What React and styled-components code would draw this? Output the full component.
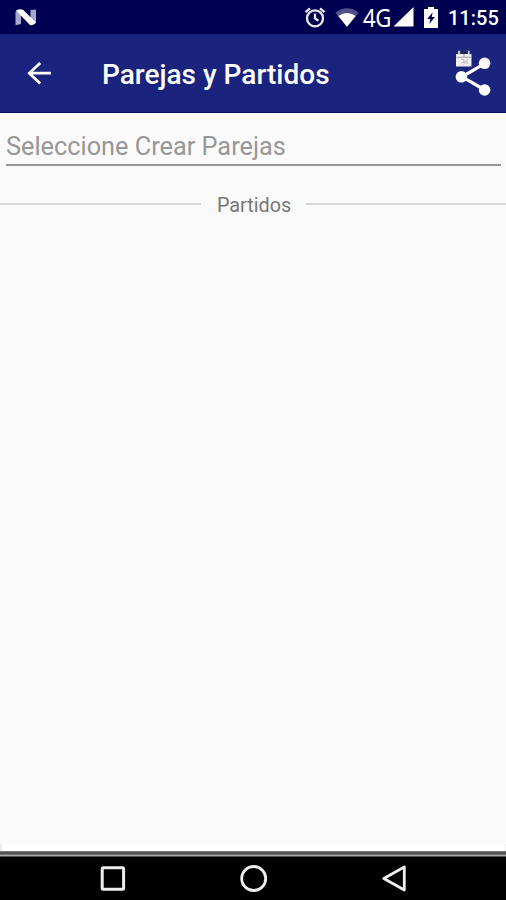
import React from "react";
import styled, { createGlobalStyle } from "styled-components";

const GlobalStyle = createGlobalStyle`
  *, *::before, *::after { box-sizing: border-box; }
  html, body { margin: 0; padding: 0; background: #fafafa; }
  body { font-family: Roboto, "Noto Sans", sans-serif; }
`;

const Screen = styled.div`
  display: flex;
  flex-direction: column;
  width: 506px;
  height: 900px;
  overflow: hidden;
  background: #fafafa;
`;

const StatusBar = styled.header`
  display: flex;
  align-items: center;
  justify-content: space-between;
  flex: none;
  height: 34px;
  padding: 0 8px 0 14px;
  background: #000051;
  color: #fff;
`;

const StatusIcons = styled.div`
  display: flex;
  align-items: center;
  height: 34px;
`;

const Icon = styled.svg`
  display: block;
  flex: none;
  width: ${(p) => p.$w}px;
  height: ${(p) => p.$h}px;
  margin-left: ${(p) => p.$gap || 0}px;
`;

const Network = styled.span`
  width: 28px;
  margin-left: 4px;
  font: 400 25.5px/34px "Noto Sans", sans-serif;
  letter-spacing: -0.5px;
  white-space: nowrap;
  transform: scaleX(0.87);
  transform-origin: left center;
`;

const Clock = styled.span`
  width: 50px;
  margin-left: 10px;
  font-size: 20px;
  font-weight: 500;
  line-height: 34px;
  letter-spacing: 0;
  white-space: nowrap;
  transform: translateY(1px);
`;

const AppBar = styled.div`
  display: flex;
  align-items: center;
  flex: none;
  height: 79px;
  padding: 0 15px 0 26px;
  background: #1a237e;
  border-bottom: 1px solid #080d60;
  color: #fff;
`;

const IconButton = styled.button`
  display: flex;
  padding: 0;
  border: 0;
  background: none;
  color: inherit;
`;

const Title = styled.h1`
  flex: 1;
  margin: 4px 0 0 50px;
  font-size: 28px;
  font-weight: 500;
  line-height: 32px;
  letter-spacing: 0;
  white-space: nowrap;
`;

const Content = styled.main`
  flex: 1;
  background: #fafafa;
`;

const Field = styled.div`
  height: 53px;
  margin: 0 5px 0 6px;
  padding-top: 18px;
  border-bottom: 2px solid #969696;
  color: #979797;
  font-size: 25.3px;
  line-height: 32px;
  white-space: nowrap;
`;

const Divider = styled.div`
  display: flex;
  align-items: center;
  height: 24px;
  margin-top: 26px;
`;

const Rule = styled.span`
  width: ${(p) => p.$w}px;
  height: 2px;
  background: #d6d6d6;
`;

const DividerLabel = styled.span`
  width: 105px;
  padding: 4px 0 0 1px;
  color: #777;
  font-size: 19.8px;
  line-height: 24px;
  text-align: center;
`;

const Footer = styled.div`
  flex: none;
  height: 13px;
  background: #fff;
  border-left: 2px solid #eee;
  border-right: 1px solid #eee;
`;

const Edge = styled.div`
  height: 6px;
  margin: 7px -1px 0 -2px;
  background: linear-gradient(#777 0 1px, #555 1px 3px, #707070 3px 4px, #aaa 4px 5px, #555 5px 6px);
`;

const NavBar = styled.nav`
  display: flex;
  align-items: center;
  justify-content: space-between;
  flex: none;
  height: 43px;
  padding: 0 98px 0 99px;
  background: #000;
`;

const AndroidN = () => (
  <Icon $w={24} $h={20} viewBox="0 0 24 20">
    <path d="M1.5 4.5 7 3v14l-5.5 1.2ZM16.5 3l5.5-.5v13.5l-5.5 2Z" fill="#a7a7ca" />
    <path d="M2 3.5Q6 1.5 9 2.7L22 15.5Q19.5 18.8 16 18Z" fill="#fff" />
  </Icon>
);

const Alarm = () => (
  <Icon $w={22} $h={22} viewBox="0 0 22 22" fill="none" stroke="#e8e8f0" strokeWidth="2.3">
    <circle cx="11" cy="12.3" r="8" />
    <path d="M1.5 6.2 6 2.4M16 2.4l4.5 3.8M11 7.5v5l3.5 2.3" />
  </Icon>
);

const Wifi = () => (
  <Icon $w={24} $h={20} $gap={9} viewBox="0 0 24 20">
    <path d="M.3 5.7Q12-3 23.7 5.7L12 19.7Z" fill="#51518a" />
    <path d="M3.3 9Q12 3 20.7 9L12 19.7Z" fill="#fff" />
  </Icon>
);

const Signal = () => (
  <Icon $w={21} $h={20} $gap={2} viewBox="0 0 21 20">
    <path d="M20.5 0v19.5H.5Z" fill="#fff" />
  </Icon>
);

const Battery = () => (
  <Icon $w={14} $h={21} $gap={10} viewBox="0 0 14 21">
    <path d="M4 0h6v2h4v19H0V2h4Z" fill="#fff" />
    <path d="M8.7 5.2 3.2 12h3.2l-1.1 5 5.6-7H7.7Z" fill="#000051" />
  </Icon>
);

const Share = () => (
  <Icon $w={36} $h={46} viewBox="0 0 36 46">
    <path d="M30 13.3 7 26.8 30 40" fill="none" stroke="#fff" strokeWidth="3.2" />
    <g fill="#fff">
      <circle cx="29.6" cy="13.3" r="5.8" />
      <circle cx="6.4" cy="26.8" r="5.8" />
      <circle cx="29.6" cy="40" r="5.8" />
    </g>
    <path d="M1 4h15.5v12.5H1Z" fill="#f1f1f3" />
    <path d="M4.2 .8v3.6M13.5 .8v3.6" stroke="#ccc" strokeWidth="2.2" />
    <path d="M5.5 1h2.5v2.7h-2.5ZM10.3 1h2.5v2.7h-2.5Z" fill="#22253e" />
    <path d="M1 7.3h15.5M9 4v3" stroke="#999" strokeWidth=".9" />
    <path d="M6 9.5h3v3H6M12.5 9l-4 5.5M12 11v3" fill="none" stroke="#b7b7b7" />
  </Icon>
);

export default function App() {
  return (
    <Screen>
      <GlobalStyle />
      <StatusBar>
        <AndroidN />
        <StatusIcons>
          <Alarm />
          <Wifi />
          <Network>4G</Network>
          <Signal />
          <Battery />
          <Clock>11:55</Clock>
        </StatusIcons>
      </StatusBar>
      <AppBar>
        <IconButton aria-label="Volver">
          <Icon $w={26} $h={26} viewBox="0 0 26 26" fill="none" stroke="#fff" strokeWidth="2.8">
            <path d="M25 13.2H3.3M14.2 2.9 3.3 13.2l10.9 10.3" />
          </Icon>
        </IconButton>
        <Title>Parejas y Partidos</Title>
        <IconButton aria-label="Compartir">
          <Share />
        </IconButton>
      </AppBar>
      <Content>
        <Field>Seleccione Crear Parejas</Field>
        <Divider>
          <Rule $w={201} />
          <DividerLabel>Partidos</DividerLabel>
          <Rule $w={200} />
        </Divider>
      </Content>
      <Footer>
        <Edge />
      </Footer>
      <NavBar>
        <Icon $w={28} $h={28} viewBox="0 0 28 28">
          <rect x="3.2" y="2.8" width="21.4" height="21.4" rx="1" fill="none" stroke="#eee" strokeWidth="3" />
        </Icon>
        <Icon $w={28} $h={28} viewBox="0 0 28 28">
          <circle cx="13.7" cy="13.5" r="12" fill="none" stroke="#eee" strokeWidth="2.8" />
        </Icon>
        <Icon $w={28} $h={28} viewBox="0 0 28 28">
          <path d="M24.3 2v23L3.8 13.5Z" fill="none" stroke="#eee" strokeWidth="2.8" strokeLinejoin="round" />
        </Icon>
      </NavBar>
    </Screen>
  );
}
